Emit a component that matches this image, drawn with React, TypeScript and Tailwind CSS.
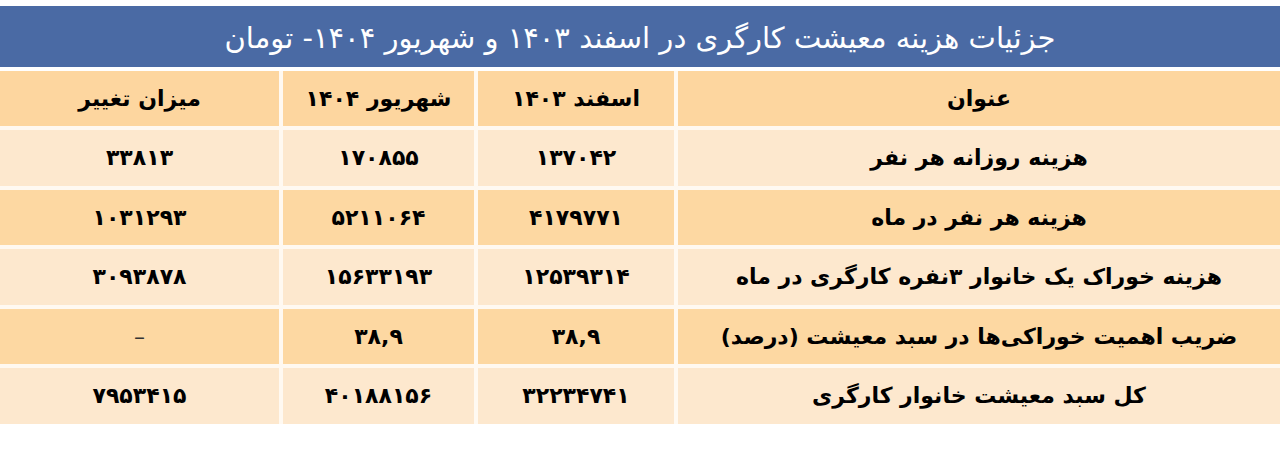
import React from 'react';

const headers = ['عنوان', 'اسفند ۱۴۰۳', 'شهریور ۱۴۰۴', 'میزان تغییر'];

const rows = [
  ['هزینه روزانه هر نفر', '۱۳۷۰۴۲', '۱۷۰۸۵۵', '۳۳۸۱۳'],
  ['هزینه هر نفر در ماه', '۴۱۷۹۷۷۱', '۵۲۱۱۰۶۴', '۱۰۳۱۲۹۳'],
  ['هزینه خوراک یک خانوار ۳نفره کارگری در ماه', '۱۲۵۳۹۳۱۴', '۱۵۶۳۳۱۹۳', '۳۰۹۳۸۷۸'],
  ['ضریب اهمیت خوراکی‌ها در سبد معیشت (درصد)', '۳۸,۹', '۳۸,۹', '–'],
  ['کل سبد معیشت خانوار کارگری', '۳۲۲۳۴۷۴۱', '۴۰۱۸۸۱۵۶', '۷۹۵۳۴۱۵'],
];

const App: React.FC = () => {
  return (
    <div
      dir="rtl"
      className="w-[1280px] h-[455px] bg-white pt-[6px] font-['DejaVu_Sans',sans-serif] text-black overflow-hidden"
    >
      {/* Title bar */}
      <div className="h-[61px] bg-[#4a6aa4] flex items-center justify-center text-white text-[29px] leading-none pt-[3px]">
        جزئیات هزینه معیشت کارگری در اسفند ۱۴۰۳ و شهریور ۱۴۰۴- تومان
      </div>

      {/* Table */}
      <div className="mt-[4px] bg-[#fff9f1] grid grid-cols-[602px_196px_191px_279px] gap-x-[4px] gap-y-[4px]">
        {headers.map(h => (
          <div
            key={h}
            className="h-[55px] bg-[#fdd69f] flex items-center justify-center text-[22px] font-bold"
          >
            {h}
          </div>
        ))}
        {rows.map((row, i) =>
          row.map((cell, j) => (
            <div
              key={`${i}-${j}`}
              className={`h-[55.5px] flex items-center justify-center text-[22px] font-bold ${
                i % 2 === 0 ? 'bg-[#fde8ce]' : 'bg-[#fdd8a2]'
              } ${cell === '–' ? 'font-normal text-[#333]' : ''}`}
            >
              {cell}
            </div>
          ))
        )}
      </div>
    </div>
  );
};

export default App;
